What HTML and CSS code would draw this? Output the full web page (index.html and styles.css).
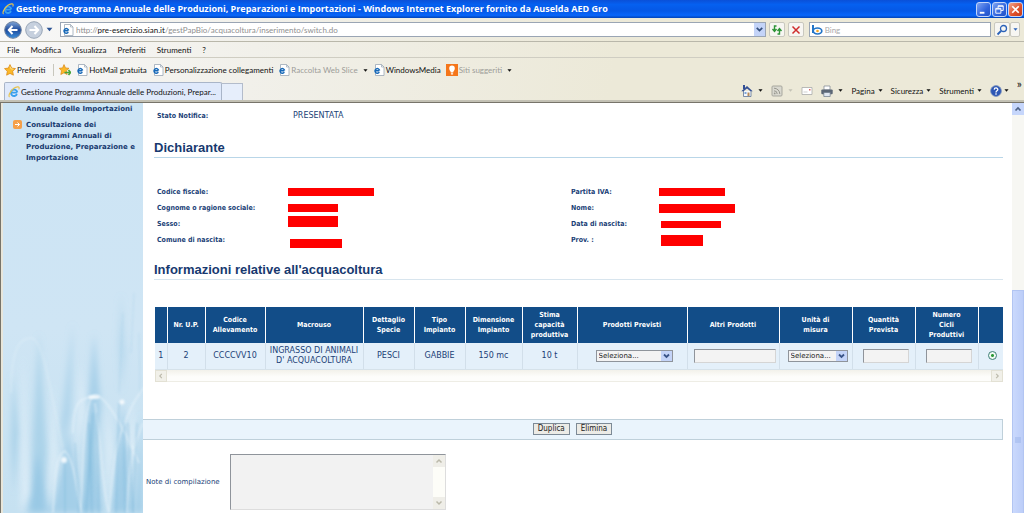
FILE: index.html
```html
<!DOCTYPE html>
<html lang="it">
<head>
<meta charset="utf-8">
<title>Gestione Programma Annuale delle Produzioni</title>
<link rel="stylesheet" href="styles.css">
</head>
<body>
<svg class="defs" aria-hidden="true">
  <symbol id="ie" viewBox="0 0 12 12">
    <path d="M3 6.600h6.200M9 8.200A3.200 3.200 0 1 1 9.300 6.400" fill="none" stroke="#39a0ee" stroke-width="1.900"/>
    <path d="M1.600 11C-.4 9.500 4 1.500 9.500.9c2-.2 2 1.200 1.200 2.600" fill="none" stroke="#e8c34c" stroke-width="1.100"/>
  </symbol>
  <symbol id="page" viewBox="0 0 12 12">
    <path d="M2.500.5h6l2.500 2.500v8.500h-8.500z" fill="#fff" stroke="#9aa7b5" stroke-width=".8"/>
    <path d="M8.500.5v2.500h2.500" fill="none" stroke="#9aa7b5" stroke-width=".7"/>
    <path d="M1.800 6.700h4.600M6.300 8.100A2.300 2.300 0 1 1 6.600 6.500" fill="none" stroke="#1668b8" stroke-width="1.500"/>
  </symbol>
  <symbol id="star" viewBox="0 0 12 12">
    <path d="M6 .6l1.700 3.500 3.800.5-2.800 2.700.7 3.900L6 9.400l-3.400 1.800.7-3.900L.5 4.600l3.800-.5z" fill="#fbb829" stroke="#d98512" stroke-width=".7"/>
    <path d="M6 2.500l1 2.400 2.400.3" fill="none" stroke="#fff0a8" stroke-width=".7"/>
  </symbol>
  <symbol id="down" viewBox="0 0 6 6"><path d="M.5 1.500h5L3 4.500z" fill="currentColor"/></symbol>
</svg>

<header class="titlebar">
  <svg class="icon"><use href="#ie"/></svg>
  <h1 class="title">Gestione Programma Annuale delle Produzioni, Preparazioni e Importazioni - Windows Internet Explorer fornito da Auselda AED Gro</h1>
  <div class="window-buttons">
    <button class="win" aria-label="Riduci a icona"><svg viewBox="0 0 14 14"><path d="M3 10.500h5" stroke="#fff" stroke-width="2"/></svg></button>
    <button class="win" aria-label="Ripristina"><svg viewBox="0 0 14 14"><path d="M5.500 5.500V3h5.500v5H8.500M3 5.800h5.500V11H3zM5.500 3.500H11M3 6.500h5.500" fill="none" stroke="#fff"/></svg></button>
    <button class="win close" aria-label="Chiudi"><svg viewBox="0 0 14 14"><path d="M3.500 3.500l7 7m0-7l-7 7" stroke="#fff" stroke-width="1.800"/></svg></button>
  </div>
</header>

<div class="chrome">
  <div class="address-row">
    <button class="round" aria-label="Indietro"><svg viewBox="0 0 18 18"><defs><linearGradient id="bk" x2="0" y2="1"><stop offset="0" stop-color="#7fa5d8"/><stop offset=".5" stop-color="#1d4a9c"/><stop offset="1" stop-color="#3c90dd"/></linearGradient></defs><circle cx="9" cy="9" r="8.300" fill="url(#bk)" stroke="#6b7f9c"/><path d="M13.500 9H5M8.500 5L4.800 9l3.700 4" fill="none" stroke="#fff" stroke-width="2"/></svg></button>
    <button class="round" aria-label="Avanti"><svg viewBox="0 0 18 18"><circle cx="9" cy="9" r="8.300" fill="#c6d0de" stroke="#98a5b6"/><path d="M4.500 9H13M9.500 5l3.700 4-3.700 4" fill="none" stroke="#fff" stroke-width="2"/></svg></button>
    <svg class="caret history"><use href="#down"/></svg>
    <div class="address">
      <svg class="icon"><use href="#page"/></svg>
      <p class="url">http://<b>pre-esercizio.sian.it</b>/gestPapBio/acquacoltura/inserimento/switch.do</p>
      <button class="drop" aria-label="Mostra indirizzi"><svg viewBox="0 0 10 10"><path d="M2.500 3.500L5 6l2.500-2.500" fill="none" stroke="#35507e" stroke-width="1.600"/></svg></button>
    </div>
    <button class="tool" aria-label="Aggiorna"><svg viewBox="0 0 14 14"><path d="M6.500 3H4.500v5M2.500 6l2 2.500 2-2.500M7.500 11h2V6M7.500 8l2-2.500 2 2.500" fill="none" stroke="#2e9437" stroke-width="1.400"/></svg></button>
    <button class="tool" aria-label="Interrompi"><svg viewBox="0 0 14 14"><path d="M3.500 3.500l7 7m0-7l-7 7" stroke="#cf2c2c" stroke-width="1.500"/></svg></button>
    <div class="search">
      <svg class="icon" viewBox="0 0 12 12"><path d="M2 1v8" stroke="#2375c8" stroke-width="2"/><ellipse cx="6.500" cy="7" rx="4.300" ry="3" fill="none" stroke="#2375c8" stroke-width="1.700"/><circle cx="6.500" cy="7" r="1.300" fill="#f5a623"/></svg>
      <input aria-label="Cerca" placeholder="Bing">
    </div>
    <div class="search-buttons">
      <button class="tool" aria-label="Avvia ricerca"><svg viewBox="0 0 14 14"><circle cx="8.500" cy="5.500" r="3" fill="none" stroke="#2b62b8" stroke-width="1.300"/><path d="M6 8l-3.500 3.500" stroke="#2b62b8" stroke-width="1.800"/></svg></button>
      <button class="tool slim" aria-label="Opzioni ricerca"><svg class="caret"><use href="#down"/></svg></button>
    </div>
  </div>
  <nav class="menu">
    <a href="#">File</a><a href="#">Modifica</a><a href="#">Visualizza</a><a href="#">Preferiti</a><a href="#">Strumenti</a><a href="#">?</a>
  </nav>
  <div class="favorites">
    <a class="fav lead" href="#"><svg class="icon"><use href="#star"/></svg>Preferiti</a>
    <a class="fav add" href="#" aria-label="Aggiungi"><svg class="icon" viewBox="0 0 12 12"><path d="M5 .6l1.500 3.300 3.500.4-2.600 2.500.7 3.700L5 8.800l-3.200 1.700.7-3.700L.3 4.300l3.300-.4z" fill="#fbb829" stroke="#d98512" stroke-width=".7"/><path d="M5.500 8.500h6M9.500 6l2 2.500-2 2.500" fill="none" stroke="#48a43a" stroke-width="1.600"/></svg></a>
    <a class="fav" href="#"><svg class="icon"><use href="#page"/></svg>HotMail gratuita</a>
    <a class="fav" href="#"><svg class="icon"><use href="#page"/></svg>Personalizzazione collegamenti</a>
    <a class="fav muted" href="#"><svg class="icon"><use href="#page"/></svg>Raccolta Web Slice<svg class="caret"><use href="#down"/></svg></a>
    <a class="fav" href="#"><svg class="icon"><use href="#page"/></svg>WindowsMedia</a>
    <a class="fav muted" href="#"><svg class="icon" viewBox="0 0 12 12"><path d="M0 0h12v12H0z" fill="#f5761a"/><path d="M4.800 8.500C4.800 7 3.200 6.300 3.200 4.400a2.800 2.800 0 0 1 5.600 0C8.800 6.300 7.200 7 7.200 8.500zM4.900 9.300h2.200v1.200H4.900z" fill="#fff"/></svg>Siti suggeriti<svg class="caret"><use href="#down"/></svg></a>
  </div>
  <div class="tabs">
    <a class="tab" href="#"><svg class="icon"><use href="#ie"/></svg>Gestione Programma Annuale delle Produzioni, Prepar...</a>
    <button class="new-tab" aria-label="Nuova scheda"></button>
    <div class="commands">
      <button class="cmd" aria-label="Pagina iniziale"><svg class="icon" viewBox="0 0 12 12"><path d="M2.500 6v5.500h7.500V6" fill="#f4f7fc" stroke="#5e7396" stroke-width=".8"/><path d="M2 0h2v4H2zM.3 6.200L6 1l5.700 5.200H9.500L6 3.500 2.500 6.200z" fill="#334f94"/><path d="M6.500 7.500h2V11h-2z" fill="#b88a58"/><path d="M3.500 7h2v2h-2z" fill="#7fa6d8"/></svg><svg class="caret"><use href="#down"/></svg></button>
      <button class="cmd feed" aria-label="Feed"><svg class="icon" viewBox="0 0 12 12"><rect x="1" y="1" width="10" height="10" rx="1" fill="#d6d6cf" stroke="#96968f"/><path d="M3 5.800A3.200 3.200 0 0 1 6.200 9M3 3.200A5.800 5.800 0 0 1 8.800 9" fill="none" stroke="#85857e"/><circle cx="3.700" cy="8.400" r=".9" fill="#85857e"/></svg><svg class="caret faint"><use href="#down"/></svg></button>
      <button class="cmd" aria-label="Posta"><svg class="icon" viewBox="0 0 12 12"><path d="M1 2.500h10v7H1z" fill="#fff" stroke="#a9a9a9" stroke-width=".8"/><path d="M8 4h1.500v1.500H8z" fill="#d66"/><path d="M2.500 7h4" stroke="#bbb" stroke-width=".7"/></svg></button>
      <button class="cmd" aria-label="Stampa"><svg class="icon" viewBox="0 0 12 12"><path d="M3 1h6v4H3z" fill="#fff" stroke="#78828e" stroke-width=".7"/><rect x=".3" y="4.500" width="11.400" height="4.800" rx="1" fill="#5b6675"/><path d="M2.800 7.500h6.400v4H2.800z" fill="#dfe6f0" stroke="#6b7888" stroke-width=".7"/></svg><svg class="caret"><use href="#down"/></svg></button>
      <button class="cmd">Pagina<svg class="caret"><use href="#down"/></svg></button>
      <button class="cmd">Sicurezza<svg class="caret"><use href="#down"/></svg></button>
      <button class="cmd">Strumenti<svg class="caret"><use href="#down"/></svg></button>
      <button class="cmd help" aria-label="Guida"><svg class="icon" viewBox="0 0 12 12"><circle cx="6" cy="6" r="5.400" fill="#2d57b4" stroke="#7e93bd" stroke-width=".8"/><path d="M4.200 4.600C4.300 2.300 8 2.500 7.800 4.700 7.700 5.900 6 5.800 6 7.400M6 8.300v1.400" fill="none" stroke="#fff" stroke-width="1.300"/></svg><svg class="caret"><use href="#down"/></svg></button>
      <button class="more" aria-label="Altro">»</button>
    </div>
  </div>
</div>

<div class="viewport">
  <aside class="sidebar">
    <svg class="wheat" viewBox="0 0 140 410" preserveAspectRatio="none" aria-hidden="true">
      <defs>
        <linearGradient id="sky" x2="0" y2="1"><stop offset="0" stop-color="#cce4f4"/><stop offset=".55" stop-color="#cfe5f4"/><stop offset="1" stop-color="#c6e1f1"/></linearGradient>
        <filter id="soft" x="-50%" y="-20%" width="200%" height="140%"><feGaussianBlur stdDeviation="3"/></filter>
        <filter id="fine"><feGaussianBlur stdDeviation=".8"/></filter>
      </defs>
      <path d="M0 0h140v410H0z" fill="url(#sky)"/>
      <g filter="url(#soft)" fill="#8ec3e2">
        <path d="M36 230l8 120-4 60H28l2-80z" opacity=".5"/>
        <path d="M10 270l6 60-5 60-3-50z" opacity=".5"/>
        <path d="M70 220l-2 90-8 40-2-30z" opacity=".45"/>
        <path d="M91 230l7 75-14 105h-4l5-110z" opacity=".6"/>
        <path d="M118 190l5 60-5 40-3-50z" opacity=".3"/>
        <path d="M88 300l12 110H78z" opacity=".7"/>
        <path d="M120 300l10 110h-22z" opacity=".7"/>
        <path d="M66 330l14 80H48z" opacity=".6"/>
        <path d="M34 350l14 60H24z" opacity=".6"/>
        <path d="M138 310l2 100h-8z" opacity=".7"/>
      </g>
      <g filter="url(#soft)" fill="#e2f0f9" opacity=".8">
        <path d="M20 250l6 140-8 20zM50 280l4 80-8 50zM104 300l6 50-6 60zM78 260l4 50-8 40zM130 300l2 50-8-10z"/>
      </g>
      <g filter="url(#fine)" fill="none" stroke="#eef7fc" stroke-width="1.500" opacity=".6">
        <path d="M8 290C8 250 15 235 28 235s20 60 32 110" opacity=".5"/>
        <path d="M78 410c2-70 4-110 12-117s28 25 46 67M70 330c0-30 6-35 20-36M50 410c2-40 4-60 12-62 10 10 12 40 16 62M106 410c4-50 8-75 16-90 8-24 16-30 18-35M124 410c2-60 8-70 16-90M92 300c8 60 8 90 14 110"/>
      </g>
      <g filter="url(#fine)" fill="none" stroke="#6aacd3" stroke-width=".8" opacity=".55">
        <path d="M90 310l-7 100M94 310l2 100M86 320l3 90M116 300l-3 110M121 320l1 90M125 320l5 90M72 340l4 70M62 360v50M134 320l-4 90"/>
        <path d="M120 210l-4 80M131 190l-3 60M136 230l1 60" opacity=".4"/>
      </g>
      <g filter="url(#fine)" fill="#fff" opacity=".8"><circle cx="119" cy="299" r="2.500"/><circle cx="61" cy="357" r="3"/><ellipse cx="91" cy="294" rx="6" ry="2"/></g>
    </svg>
    <ul class="side-menu">
      <li><a href="#">Annuale delle Importazioni</a></li>
      <li class="marked"><svg class="bullet" viewBox="0 0 9 9"><rect width="9" height="9" rx="2" fill="#f5a04a"/><path d="M2 4.500h4.500M4.500 2.500l2 2-2 2" fill="none" stroke="#fff"/></svg><a href="#">Consultazione dei Programmi Annuali di Produzione, Preparazione e Importazione</a></li>
    </ul>
  </aside>

  <main class="content">
    <dl class="fields status"><dt>Stato Notifica:</dt><dd>PRESENTATA</dd></dl>
    <h2 class="heading">Dichiarante</h2>
    <dl class="fields person">
      <dt>Codice fiscale:</dt><dd><span class="mask w86"></span></dd>
      <dt>Partita IVA:</dt><dd><span class="mask w66"></span></dd>
      <dt>Cognome o ragione sociale:</dt><dd><span class="mask w50"></span></dd>
      <dt>Nome:</dt><dd><span class="mask w76 mid"></span></dd>
      <dt>Sesso:</dt><dd><span class="mask w50 tall up"></span></dd>
      <dt>Data di nascita:</dt><dd><span class="mask w60 thin in"></span></dd>
      <dt>Comune di nascita:</dt><dd><span class="mask w52 mid in low"></span></dd>
      <dt>Prov. :</dt><dd><span class="mask w42 tall in"></span></dd>
    </dl>
    <h2 class="heading second">Informazioni relative all'acquacoltura</h2>

    <div class="grid-wrap">
      <table class="grid">
        <colgroup><col class="c12"><col class="c38"><col class="c60"><col class="c98"><col class="c51"><col class="c51"><col class="c57"><col class="c55"><col class="c110"><col class="c92"><col class="c73"><col class="c63"><col class="c63"><col class="c25"></colgroup>
        <thead><tr>
          <th></th><th>Nr. U.P.</th><th>Codice<br>Allevamento</th><th>Macrouso</th><th>Dettaglio<br>Specie</th><th>Tipo<br>Impianto</th><th>Dimensione<br>Impianto</th><th>Stima<br>capacità<br>produttiva</th><th>Prodotti Previsti</th><th>Altri Prodotti</th><th>Unità di<br>misura</th><th>Quantità<br>Prevista</th><th>Numero<br>Cicli<br>Produttivi</th><th></th>
        </tr></thead>
        <tbody><tr>
          <td>1</td><td>2</td><td>CCCCVV10</td><td>INGRASSO DI ANIMALI<br>D' ACQUACOLTURA</td><td>PESCI</td><td>GABBIE</td><td>150 mc</td><td>10 t</td>
          <td class="ctl"><select class="pick wide" aria-label="Prodotti Previsti"><option>Seleziona...</option></select></td>
          <td class="ctl"><input class="box" aria-label="Altri Prodotti"></td>
          <td class="ctl"><select class="pick" aria-label="Unità di misura"><option>Seleziona...</option></select></td>
          <td class="ctl"><input class="box short" aria-label="Quantità Prevista"></td>
          <td class="ctl"><input class="box short" aria-label="Numero Cicli Produttivi"></td>
          <td class="ctl"><input class="radio" type="radio" name="riga" checked aria-label="Riga 1"></td>
        </tr></tbody>
      </table>
      <div class="hscroll">
        <button aria-label="Scorri a sinistra"><svg viewBox="0 0 12 12"><path d="M7 3.500L4.500 6 7 8.500" fill="none" stroke="#bbb9aa" stroke-width="1.300"/></svg></button>
        <button aria-label="Scorri a destra"><svg viewBox="0 0 12 12"><path d="M5 3.500L7.500 6 5 8.500" fill="none" stroke="#bbb9aa" stroke-width="1.300"/></svg></button>
      </div>
    </div>

    <div class="actions"><button class="btn">Duplica</button><button class="btn">Elimina</button></div>

    <div class="notes">
      <label for="note">Note di compilazione</label>
      <div class="area">
        <textarea id="note"></textarea>
        <div class="area-scroll">
          <svg viewBox="0 0 12 12"><path d="M3.500 7.500L6 5l2.500 2.500" fill="none" stroke="#bbb9aa" stroke-width="1.500"/></svg>
          <svg viewBox="0 0 12 12"><path d="M3.500 4.500L6 7l2.500-2.500" fill="none" stroke="#bbb9aa" stroke-width="1.500"/></svg>
        </div>
      </div>
    </div>
  </main>

  <div class="vscroll">
    <button aria-label="Scorri in alto"><svg viewBox="0 0 12 12"><path d="M3.500 7.500L6 5l2.500 2.500" fill="none" stroke="#4d6185" stroke-width="1.700"/></svg></button>
    <div class="thumb"><svg viewBox="0 0 6 6"><path d="M0 1h6M0 3h6M0 5h6" stroke="#9db5ea" stroke-width="1"/></svg></div>
  </div>
</div>
</body>
</html>
```
FILE: styles.css
```css
* { box-sizing: border-box; }
html, body { height: 100%; margin: 0; }
body {
  display: flex;
  flex-direction: column;
  overflow: hidden;
  background: #fff;
  color: #111;
  font: 8px/12px Lato, "DejaVu Sans Condensed", sans-serif;
}
a { color: inherit; text-decoration: none; }
button { padding: 0; border: 0; background: none; color: inherit; font: inherit; }
svg { display: block; }
.defs { position: absolute; width: 0; height: 0; }
.icon { width: 12px; height: 12px; flex: none; }
.caret { width: 5px; height: 5px; flex: none; color: #111; }

/* Title bar */
.titlebar {
  display: flex;
  align-items: center;
  gap: 2px;
  flex: none;
  height: 18px;
  padding: 0 1px 0 2px;
  background: linear-gradient(#0a50d8, #0560f0 25%, #0558e6 60%, #0866fa 85%, #0344b8);
}
.title { flex: 1; margin: 0; overflow: hidden; white-space: nowrap; color: #fff; font: bold 9px/16px "Open Sans", sans-serif; }
.window-buttons { display: flex; gap: 1px; }
.win { width: 15px; height: 15px; border: 1px solid #c3d5fa; border-radius: 3px; background: linear-gradient(135deg, #7fa4f2, #2f63dd 60%, #2453c4); }
.close { background: linear-gradient(135deg, #f0a58c, #de4f2a 60%, #c43c18); }

/* Browser toolbars */
.chrome { flex: none; border-bottom: 1px solid #77746a; background: linear-gradient(100deg, #f8f8f8, #f1f0ea 25%, #ece9d8 60%); }
.address-row { display: flex; align-items: center; gap: 3px; height: 24px; padding: 0 4px; border-bottom: 1px solid #b9b7aa; }
.round { width: 18px; height: 18px; }
.history { width: 7px; height: 7px; margin-right: 4px; color: #2b5394; }
.address, .search { display: flex; align-items: center; min-width: 0; height: 15px; border: 1px solid #9aa5b4; background: #fff; }
.address { flex: 709 1 0; gap: 2px; padding-left: 1px; }
.url { flex: 1; margin: 0; overflow: hidden; white-space: nowrap; color: #8f8f8f; }
.url b { color: #111; font-weight: normal; }
.drop { width: 11px; height: 13px; background: #c4d4f8; }
.tool { width: 16px; height: 15px; border: 1px solid #c9c8bf; border-radius: 2px; background: #f7f6f2; }
.slim { display: flex; align-items: center; justify-content: center; width: 10px; }
.slim .caret { color: #2b62b8; }
.search { flex: 181 1 0; margin-left: 2px; padding-left: 1px; gap: 2px; }
.search input { flex: 1; min-width: 0; padding: 0; border: 0; outline: 0; font: inherit; }
.search input::placeholder { color: #aaa; }
.search-buttons { display: flex; }
.menu { display: flex; align-items: center; gap: 11px; height: 16px; padding: 0 7px; border-bottom: 1px solid #cfcdc2; }
.favorites { display: flex; align-items: center; gap: 5px; height: 24px; padding-left: 4px; }
.fav { display: flex; align-items: center; gap: 1px; white-space: nowrap; }
.fav .caret { margin-left: 4px; }
.lead { padding-right: 8px; border-right: 1px solid #c8c7bd; }
.muted { color: #9c9c98; }
.tabs { display: flex; align-items: flex-end; height: 20px; padding-left: 4px; border-bottom: 2px solid #c3c1b4; }
.tab { display: flex; align-items: center; gap: 1px; height: 18px; padding: 0 5px 0 3px; border: 1px solid #a9b5c8; border-bottom: 0; border-radius: 2px 2px 0 0; background: #dfe9fb; white-space: nowrap; }
.new-tab { width: 21px; height: 17px; border: 1px solid #b3bccb; border-left: 0; border-bottom: 0; background: #e6eefb; }
.commands { display: flex; align-items: center; gap: 8px; margin-left: auto; height: 19px; padding-right: 2px; }
.cmd { display: flex; align-items: center; gap: 3px; }
.cmd .icon + .caret { margin-left: 2px; }
.feed .icon { opacity: .8; }
.faint { color: #c4c2b6; }
.help { gap: 0; }
.more { align-self: flex-start; font-size: 12px; line-height: 6px; }

/* Page */
.viewport { display: flex; flex: 1; min-height: 0; border-left: 1px solid #77746a; color: #1b3f77; font-family: "DejaVu Sans", sans-serif; }
.sidebar { position: relative; flex: none; width: 142px; border-left: 2px solid #e8e6da; overflow: hidden; }
.wheat { position: absolute; inset: 0; width: 100%; height: 100%; }
.side-menu { position: relative; margin: 0; padding: 0 4px 0 23px; list-style: none; color: #17396f; font: bold 7px/11px "DejaVu Sans", sans-serif; }
.side-menu li { position: relative; margin-bottom: 5px; }
.side-menu li:first-child { padding-top: 1px; }
.bullet { position: absolute; top: 0; left: -13px; width: 9px; height: 9px; }

.content { flex: 1; min-width: 0; padding-right: 9px; }
.fields { display: grid; margin: 0; padding-left: 14px; line-height: 16px; }
.fields dt { font: bold 7px/16px "DejaVu Sans Condensed", sans-serif; }
.fields dd { display: flex; align-items: center; margin: 0; }
.status { grid-template-columns: 136px 1fr; padding-top: 5px; }
.status dd { font-size: 8px; }
.heading { margin: 15px 0 0 11px; border-bottom: 1px solid #b9d6e8; color: #17396f; font: bold 13px/18px "Liberation Sans", sans-serif; }
.person { grid-template-columns: 131px 283fr 88px 344fr; padding-top: 26px; }
.mask { height: 8px; background: #f00; }
.mid { height: 9px; }
.tall { height: 11px; }
.thin { height: 7px; }
.up { align-self: flex-start; }
.low { align-self: flex-end; }
.in { margin-left: 2px; }
.w42 { width: 42px; } .w50 { width: 50px; } .w52 { width: 52px; } .w60 { width: 60px; }
.w66 { width: 66px; } .w76 { width: 76px; } .w86 { width: 86px; }
.second { margin-top: 13px; border-bottom-color: #d8e5ee; }

.grid-wrap { margin: 27px 0 0 12px; }
.grid { width: 100%; border-collapse: collapse; table-layout: fixed; text-align: center; }
.grid th, .grid td { padding: 0; border-right: 1px solid #fff; }
.grid th:last-child, .grid td:last-child { border-right: 0; }
.grid th { height: 36px; background: #124d88; color: #fff; font: bold 7px/10px "DejaVu Sans Condensed", sans-serif; }
.grid td { height: 26px; border-right-color: #d2dfea; border-bottom: 1px solid #d6e2ea; background: #e4f0fa; font-size: 8px; line-height: 10px; white-space: nowrap; }
.grid .ctl { padding-left: 4px; }
.c12 { width: 12px; } .c25 { width: 25px; } .c38 { width: 38px; } .c51 { width: 51px; }
.c55 { width: 55px; } .c57 { width: 57px; } .c60 { width: 60px; } .c63 { width: 63px; }
.c73 { width: 73px; } .c92 { width: 92px; } .c98 { width: 98px; } .c110 { width: 110px; }
.pick {
  display: block;
  width: 60px;
  height: 12px;
  margin: auto;
  padding: 0 0 0 2px;
  border: 1px solid #8f949b;
  border-radius: 0;
  appearance: none;
  background: #f3f3f3 url("data:image/svg+xml,%3Csvg xmlns='http://www.w3.org/2000/svg' viewBox='0 0 11 10'%3E%3Cpath d='M0 0h11v10H0z' fill='%23c4d4f8'/%3E%3Cpath d='M3 3.500L5.500 6 8 3.500' fill='none' stroke='%233a5488' stroke-width='1.800'/%3E%3C/svg%3E") right center / 11px 10px no-repeat;
  color: #222;
  font: 7px/10px "DejaVu Sans", sans-serif;
}
.wide { width: 77px; }
.box { display: block; width: 82px; height: 14px; margin: auto; padding: 1px; border: 1px solid #8f949b; border-right-color: #d5d5d5; border-bottom-color: #d5d5d5; background: #f3f3f3; font: inherit; }
.short { width: 46px; }
.radio { display: block; width: 9px; height: 9px; margin: auto; border: 1px solid #3d7f76; border-radius: 50%; appearance: none; background: radial-gradient(#2f9a3a 0 1px, #f2faf4 2px); }
.hscroll { display: flex; justify-content: space-between; height: 12px; border-bottom: 1px solid #eeede5; background: linear-gradient(#f2f1ea, #fdfdfb 60%); }
.hscroll button { width: 12px; height: 12px; border: 1px solid #e3e1d4; background: #f1f0e9; }

.actions { display: flex; justify-content: center; gap: 6px; align-items: center; height: 21px; margin-top: 37px; border: 1px solid #bfd0da; border-left: 0; background: #eaf4fc; }
.btn { height: 12px; padding: 0 4px; border: 1px solid #7d8a96; background: #ecebe6; color: #222; font: 8px/10px "DejaVu Sans Condensed", sans-serif; }
.notes { display: grid; grid-template-columns: 84px 216px; align-items: center; margin-top: 14px; padding-left: 3px; }
.notes label { font-size: 7px; }
.area { display: flex; height: 56px; border: 1px solid #8f949b; border-right-color: #ddd; border-bottom-color: #ddd; background: #f2f2f2; }
.area textarea { flex: 1; min-width: 0; padding: 1px; border: 0; outline: 0; resize: none; background: none; font: inherit; }
.area-scroll { display: flex; flex-direction: column; justify-content: space-between; width: 12px; background: #fdfdf8; }
.area-scroll svg { width: 12px; height: 12px; background: #efeee8; }

.vscroll { display: flex; flex-direction: column; flex: none; width: 12px; background: #f7f7f3; }
.vscroll button { height: 12px; background: #c6d6fb; }
.thumb { display: flex; align-items: flex-start; justify-content: center; flex: 1; min-height: 0; margin-top: 175px; padding-top: 146px; border: 1px solid #b2c5f2; border-bottom: 0; background: linear-gradient(90deg, #cad9fd, #bccdf8); }
.thumb svg { width: 6px; height: 6px; }
```
